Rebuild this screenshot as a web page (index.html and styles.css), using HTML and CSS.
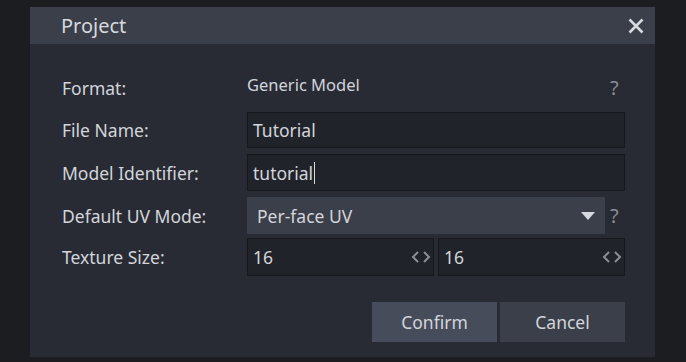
FILE: index.html
```html
<!DOCTYPE html>
<html lang="en">
<head>
  <meta charset="UTF-8">
  <meta name="viewport" content="width=device-width, initial-scale=1.0">
  <title>Project</title>

  <link rel="stylesheet" href="styles.css">
</head>
<body>
  <div class="dialog">
    <div class="title-bar">
      <span class="title">Project</span>
      <svg class="close" width="16" height="16" viewBox="0 0 16 16">
        <path d="M1.5 1.5 L14.5 14.5 M14.5 1.5 L1.5 14.5" stroke="#d6d9df" stroke-width="2.6" fill="none"/>
      </svg>
    </div>

    <div class="content">
      <div class="row row-format">
        <label>Format:</label>
        <div class="value">Generic Model</div>
        <span class="help">?</span>
      </div>

      <div class="row">
        <label>File Name:</label>
        <div class="input">Tutorial</div>
      </div>

      <div class="row row-tall">
        <label>Model Identifier:</label>
        <div class="input">tutorial<span class="caret"></span></div>
      </div>

      <div class="row row-tall">
        <label>Default UV Mode:</label>
        <div class="select">
          <span>Per-face UV</span>
          <svg width="14" height="8" viewBox="0 0 14 8"><path d="M0 0 H14 L7 8 Z" fill="#d6d9df"/></svg>
        </div>
        <span class="help">?</span>
      </div>

      <div class="row row-size">
        <label>Texture Size:</label>
        <div class="pair">
          <div class="input number">
            <span>16</span>
            <svg width="20" height="12" viewBox="0 0 20 12"><path d="M7 1 L2 6 L7 11 M13 1 L18 6 L13 11" stroke="#8a8e97" stroke-width="2" fill="none"/></svg>
          </div>
          <div class="input number">
            <span>16</span>
            <svg width="20" height="12" viewBox="0 0 20 12"><path d="M7 1 L2 6 L7 11 M13 1 L18 6 L13 11" stroke="#8a8e97" stroke-width="2" fill="none"/></svg>
          </div>
        </div>
      </div>

      <div class="buttons">
        <button class="confirm">Confirm</button>
        <button>Cancel</button>
      </div>
    </div>
  </div>
</body>
</html>
```

FILE: styles.css
```css
body {
  margin: 0;
  height: 362px;
  background: #1c1d21;
  font-family: "Noto Sans", "Open Sans", sans-serif;
  color: #d2d5db;
  overflow: hidden;
}

.dialog {
  margin: 7px 0 0 30px;
  width: 625px;
  height: 350px;
  background: #282b33;
}

.title-bar {
  height: 37px;
  background: #3b3f4a;
  display: flex;
  align-items: center;
  justify-content: space-between;
  padding: 0 11px 0 31px;
}
.title {
  font-size: 20px;
  color: #d6d9df;
}
.close {
  display: block;
}

.content {
  padding: 26px 30px 0 32px;
}

.row {
  display: flex;
  align-items: center;
  height: 36px;
  margin-bottom: 6px;
  font-size: 17.5px;
}
.row-tall {
  height: 37px;
}
.row-size {
  height: 38px;
  margin-top: -2px;
  margin-bottom: 0;
}
.row label {
  width: 185px;
  flex: none;
}

.row-format .value {
  flex: 1;
  font-size: 16.5px;
  margin-top: -7px;
}
.help {
  color: #8a8e97;
  font-size: 20px;
  width: 20px;
  padding-left: 5px;
  box-sizing: border-box;
  text-align: left;
}
.row-format .help {
  margin-top: -2px;
}

.input {
  flex: 1;
  height: 100%;
  box-sizing: border-box;
  background: #21232a;
  border: 1px solid #17181c;
  padding: 0 5px;
  display: flex;
  align-items: center;
}
.caret {
  display: inline-block;
  width: 1px;
  height: 22px;
  background: #d6d9df;
  margin-left: 1px;
}

.select {
  flex: 1;
  height: 100%;
  box-sizing: border-box;
  background: #3b3f4a;
  padding: 0 10px 0 10px;
  display: flex;
  align-items: center;
  justify-content: space-between;
}

.pair {
  flex: 1;
  height: 100%;
  display: flex;
  gap: 4px;
}
.number {
  justify-content: space-between;
  padding-right: 2px;
}

.buttons {
  display: flex;
  justify-content: flex-end;
  gap: 3px;
  margin-top: 26px;
}
.buttons button {
  width: 125px;
  height: 40px;
  border: none;
  background: #3b3f4a;
  color: #d2d5db;
  font-family: inherit;
  font-size: 17.5px;
}
.buttons .confirm {
  background: #474c5b;
}
```
